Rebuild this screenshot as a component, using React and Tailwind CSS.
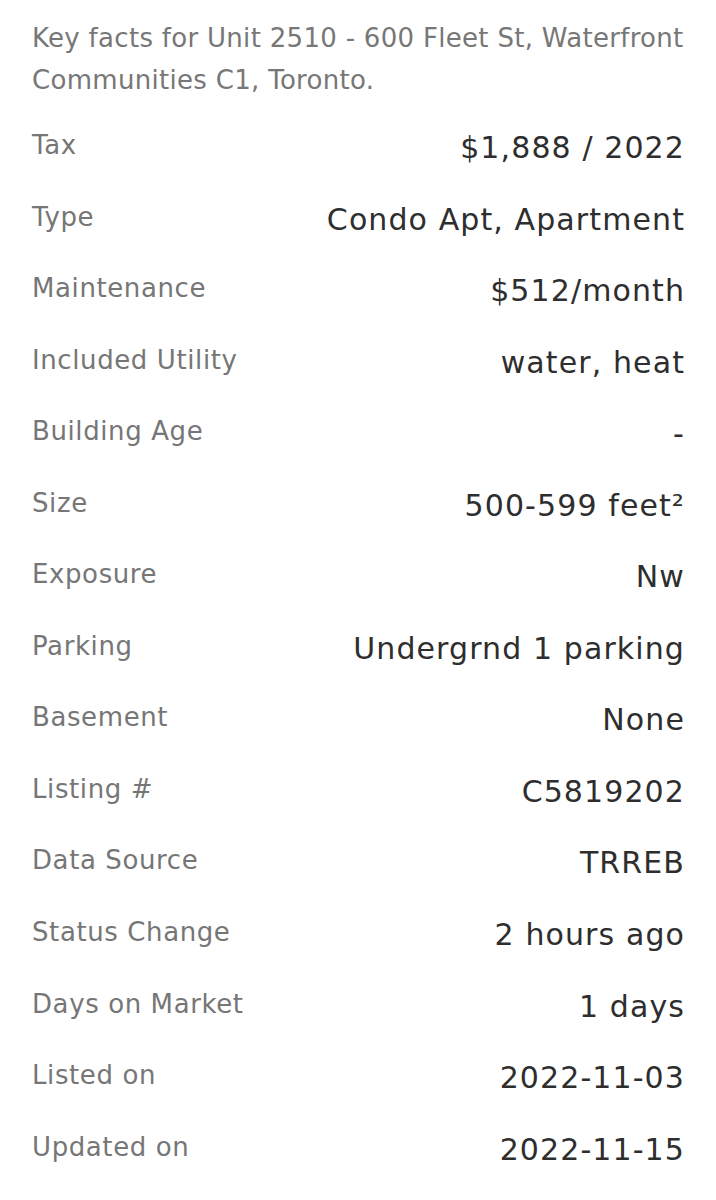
const FACTS = [
  ["Tax", "$1,888 / 2022"],
  ["Type", "Condo Apt, Apartment"],
  ["Maintenance", "$512/month"],
  ["Included Utility", "water, heat"],
  ["Building Age", "-"],
  ["Size", "500-599 feet²"],
  ["Exposure", "Nw"],
  ["Parking", "Undergrnd 1 parking"],
  ["Basement", "None"],
  ["Listing #", "C5819202"],
  ["Data Source", "TRREB"],
  ["Status Change", "2 hours ago"],
  ["Days on Market", "1 days"],
  ["Listed on", "2022-11-03"],
  ["Updated on", "2022-11-15"],
];

export default function App() {
  return (
    <div
      className="min-h-screen bg-white px-[32px] pt-[17px]"
      style={{ fontFamily: '"DejaVu Sans", "Noto Sans", sans-serif' }}
    >
      {/* intro */}
      <p className="text-[26px] leading-[42px] tracking-[0.3px] text-[#777777] mb-[8px]">
        Key facts for Unit 2510 - 600 Fleet St, Waterfront
        <br />
        Communities C1, Toronto.
      </p>

      {/* facts list */}
      <div className="flex flex-col">
        {FACTS.map(([label, value]) => (
          <div key={label} className="h-[71.55px] py-[18px] flex items-start justify-between">
            <span className="text-[26px] leading-[36px] tracking-[0.6px] text-[#767676]">{label}</span>
            <span className="mt-[3px] -mr-[1px] text-[30px] leading-[36px] tracking-[1.1px] text-[#2e2e2e]">
              {value}
            </span>
          </div>
        ))}
      </div>
    </div>
  );
}
